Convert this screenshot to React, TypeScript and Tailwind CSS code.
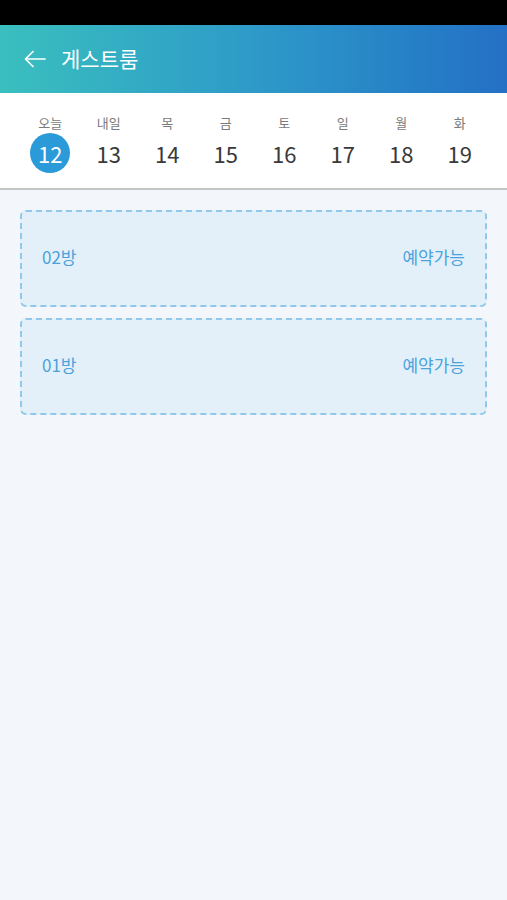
const days = [
  { label: '오늘', date: 12, today: true },
  { label: '내일', date: 13 },
  { label: '목', date: 14 },
  { label: '금', date: 15 },
  { label: '토', date: 16 },
  { label: '일', date: 17 },
  { label: '월', date: 18 },
  { label: '화', date: 19 },
];

const rooms = [
  { name: '02방', status: '예약가능' },
  { name: '01방', status: '예약가능' },
];

function BackArrow() {
  return (
    <svg width="22" height="18" viewBox="0 0 22 18" fill="none" stroke="white" strokeWidth="1.7" strokeLinecap="round" strokeLinejoin="round">
      <path d="M21 9H2" />
      <path d="M9 1.5 1.5 9 9 16.5" />
    </svg>
  );
}

export default function App() {
  return (
    <div
      className="min-h-[900px] bg-[#f3f6fa] flex flex-col"
      style={{ fontFamily: '"Noto Sans CJK KR", "Noto Sans", sans-serif' }}
    >
      {/* Status bar */}
      <div className="h-[25px] bg-black" />

      {/* Header */}
      <div className="h-[68px] bg-gradient-to-r from-[#3bbfbe] via-[#2e9ac8] to-[#2470c5] flex items-center pl-[24px]">
        <BackArrow />
        <span className="ml-[15px] text-[21px] font-normal text-white">게스트룸</span>
      </div>

      {/* Date strip */}
      <div className="bg-white border-b-2 border-[#c4c4c4] pl-[21px] pr-[18px] pt-[20px] pb-[15px] grid grid-cols-8">
        {days.map((d) => (
          <div key={d.date} className="flex flex-col items-center">
            <span className="text-[13px] leading-[20px] text-[#7a7a7a]">{d.label}</span>
            <div
              className={`w-[40px] h-[40px] rounded-full flex items-center justify-center text-[22px] font-normal leading-none ${
                d.today ? 'bg-[#2a9ad9] text-white' : 'text-[#3a3a3a]'
              }`}
            >
              {d.date}
            </div>
          </div>
        ))}
      </div>

      {/* Rooms */}
      <div className="px-[20px] pt-[20px] flex flex-col gap-[11px]">
        {rooms.map((r) => (
          <div
            key={r.name}
            className="h-[97px] rounded-[6px] border-2 border-dashed border-[#8fc8ea] bg-[#e3f0f9] flex items-center justify-between px-[20px] pb-[4px]"
          >
            <span className="text-[17px] text-[#4ba2dc]">{r.name}</span>
            <span className="text-[17px] text-[#4ba2dc]">{r.status}</span>
          </div>
        ))}
      </div>
    </div>
  );
}
